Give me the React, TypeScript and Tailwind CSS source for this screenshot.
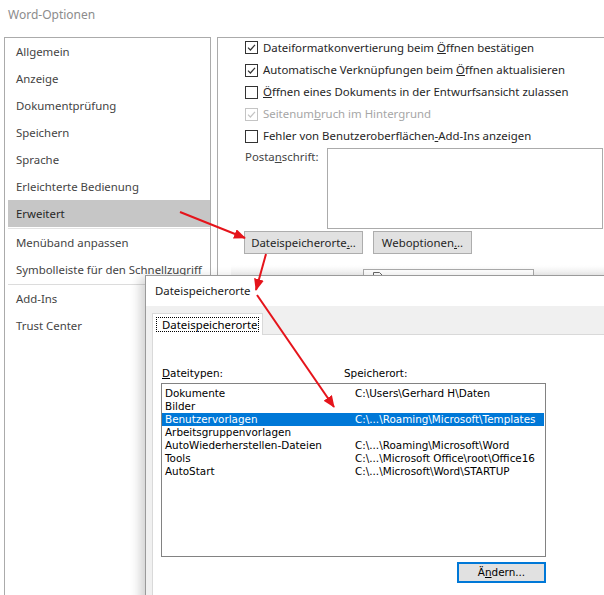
import React from "react";

const navTop = ["Allgemein", "Anzeige", "Dokumentprüfung", "Speichern", "Sprache", "Erleichterte Bedienung"];

const Check = ({ disabled }: { disabled?: boolean }) => (
  <svg width="13" height="13" viewBox="0 0 13 13" className="shrink-0">
    <rect x="0.5" y="0.5" width="12" height="12" fill="white" stroke={disabled ? "#c4c4c4" : "#333333"} />
    <polyline points="3,6.6 5.4,9 10,3.8" fill="none" stroke={disabled ? "#c4c4c4" : "#333333"} strokeWidth="1.2" />
  </svg>
);

const Empty = () => (
  <svg width="13" height="13" viewBox="0 0 13 13" className="shrink-0">
    <rect x="0.5" y="0.5" width="12" height="12" fill="white" stroke="#333333" />
  </svg>
);

const files = [
  { name: "Dokumente", path: "C:\\Users\\Gerhard H\\Daten" },
  { name: "Bilder", path: "" },
  { name: "Benutzervorlagen", path: "C:\\...\\Roaming\\Microsoft\\Templates", sel: true },
  { name: "Arbeitsgruppenvorlagen", path: "" },
  { name: "AutoWiederherstellen-Dateien", path: "C:\\...\\Roaming\\Microsoft\\Word" },
  { name: "Tools", path: "C:\\...\\Microsoft Office\\root\\Office16" },
  { name: "AutoStart", path: "C:\\...\\Microsoft\\Word\\STARTUP" },
];

export default function App() {
  return (
    <div className="relative w-[604px] h-[595px] overflow-hidden bg-white font-['Noto_Sans',sans-serif] text-[11.4px]">
      <div className="h-[37px] pl-[8px] pt-[6px] text-[12px] leading-[18px] text-[#8c8c8c]">Word-Optionen</div>
      <div className="flex h-[558px]">
        {/* left nav */}
        <nav className="ml-[4px] w-[207px] border border-b-0 border-[#ababab] text-[#444444]">
          {navTop.map((n) => (
            <div key={n} className="h-[27px] pl-[11px] leading-[27px]">{n}</div>
          ))}
          <div className="ml-[3px] h-[27px] bg-[#c6c6c6] pl-[8px] leading-[27px] text-[#262626]">Erweitert</div>
          <div className="mt-px ml-[3px] h-px bg-[#e3e3e3]" />
          <div className="h-[27px] pl-[11px] leading-[27px]">Menüband anpassen</div>
          <div className="h-[27px] pl-[11px] leading-[27px]">Symbolleiste für den Schnellzugriff</div>
          <div className="mt-px ml-[3px] h-px bg-[#dcdcdc]" />
          <div className="h-[27px] pl-[11px] leading-[27px]">Add-Ins</div>
          <div className="h-[27px] pl-[11px] leading-[27px]">Trust Center</div>
        </nav>

        {/* right panel */}
        <div className="ml-[6px] flex-1 border-l border-t border-[#ababab] text-[#262626]">
          <div className="-mt-[2px] pl-[27px]">
            <div className="flex h-[23px] items-center gap-[5px]">
              <Check />
              <span>Dateiformatkonvertierung beim <u>Ö</u>ffnen bestätigen</span>
            </div>
            <div className="flex h-[22px] items-center gap-[5px]">
              <Check />
              <span>Automatische Verknüpfungen beim <u>Ö</u>ffnen aktualisieren</span>
            </div>
            <div className="flex h-[22px] items-center gap-[5px]">
              <Empty />
              <span><u>Ö</u>ffnen eines Dokuments in der Entwurfsansicht zulassen</span>
            </div>
            <div className="flex h-[22px] items-center gap-[5px] text-[#a6a6a6]">
              <Check disabled />
              <span>Seitenum<u>b</u>ruch im Hintergrund</span>
            </div>
            <div className="flex h-[22px] items-center gap-[5px]">
              <Empty />
              <span>Fehler von Benutzeroberflächen<u>-</u>Add-Ins anzeigen</span>
            </div>
          </div>
          <div className="mt-px flex pl-[27px]">
            <div className="w-[82px] pt-[2px] leading-[14px] text-[#444444]">Posta<u>n</u>schrift:</div>
            <div className="mr-px h-[81px] flex-1 border border-[#ababab]" />
          </div>
          <div className="mt-[2px] flex gap-[10px] pl-[26px]">
            <div className="flex h-[23px] w-[119px] items-center justify-center border border-[#adadad] bg-[#e1e1e1]">
              Dateispeicherorte<u>.</u>..
            </div>
            <div className="flex h-[23px] w-[99px] items-center justify-center border border-[#adadad] bg-[#e1e1e1]">
              Weboptionen<u>.</u>..
            </div>
          </div>
          <div className="relative mt-[11px] ml-[13px] h-[30px] bg-gradient-to-b from-white to-[#d9d9d9]">
            <div className="absolute left-[132px] top-[4px] h-[30px] w-[171px] border border-[#ababab] bg-white pl-[9px] pt-[2px]">
              <svg width="10" height="12" viewBox="0 0 10 12">
                <path d="M0.5 0.5 H6.5 L9.5 3.5 V11.5 H0.5 Z" fill="white" stroke="#666" />
              </svg>
            </div>
          </div>
        </div>
      </div>

      {/* Dialog */}
      <div className="absolute left-[145px] top-[275px] h-[340px] w-[480px] border border-[#9a9a9a] bg-[#f0f0f0] shadow-[-5px_2px_10px_rgba(0,0,0,0.18)]">
        <div className="h-[30px] bg-white pl-[9px] leading-[30px] text-[#1a1a1a]">Dateispeicherorte</div>
        <div className="pt-[7px] pl-[6px]">
          <div className="relative z-10 h-[22px] w-[111px] border border-b-0 border-[#d9d9d9] bg-white pt-[3px] pl-[3px]">
            <div className="h-[15px] w-[103px] border border-dotted border-black pl-[5px] leading-[13px] text-black">
              Dateispeicherorte
            </div>
          </div>
          <div className="-mt-px h-[300px] border border-[#d9d9d9] bg-white pl-[8px] pt-[32px] font-['DejaVu_Sans',sans-serif] text-[10.4px] text-black">
            <div className="flex h-[13px] leading-[13px]">
              <div className="w-[183px] pl-px"><u>D</u>ateitypen:</div>
              <div>Speicherort:</div>
            </div>
            <div className="mt-[3px] h-[174px] w-[385px] border border-[#828282] pt-[3px]">
              {files.map((f) => (
                <div
                  key={f.name}
                  className={`mr-px flex h-[13px] leading-[13px] ${f.sel ? "bg-[#0078d7] text-white" : ""}`}
                >
                  <div className="w-[193px] pl-[3px]">{f.name}</div>
                  <div>{f.path}</div>
                </div>
              ))}
            </div>
            <div className="mt-[5px] flex w-[385px] justify-end">
              <div className="flex h-[21px] w-[89px] items-center justify-center border-2 border-[#0078d7] bg-[#e1e1e1]">
                Ä<u>n</u>dern...
              </div>
            </div>
          </div>
        </div>
      </div>

      {/* red arrows */}
      <svg className="pointer-events-none absolute inset-0" width="604" height="595">
        <defs>
          <marker id="ah" markerWidth="12" markerHeight="10" refX="11" refY="5" orient="auto" markerUnits="userSpaceOnUse">
            <path d="M0,0 L12,5 L0,10 z" fill="#e5141b" />
          </marker>
        </defs>
        <line x1="180" y1="212" x2="245" y2="238" stroke="#e5141b" strokeWidth="2" markerEnd="url(#ah)" />
        <line x1="266" y1="254" x2="256" y2="290" stroke="#e5141b" strokeWidth="2" markerEnd="url(#ah)" />
        <line x1="257" y1="295" x2="334" y2="407" stroke="#e5141b" strokeWidth="2" markerEnd="url(#ah)" />
      </svg>
    </div>
  );
}
